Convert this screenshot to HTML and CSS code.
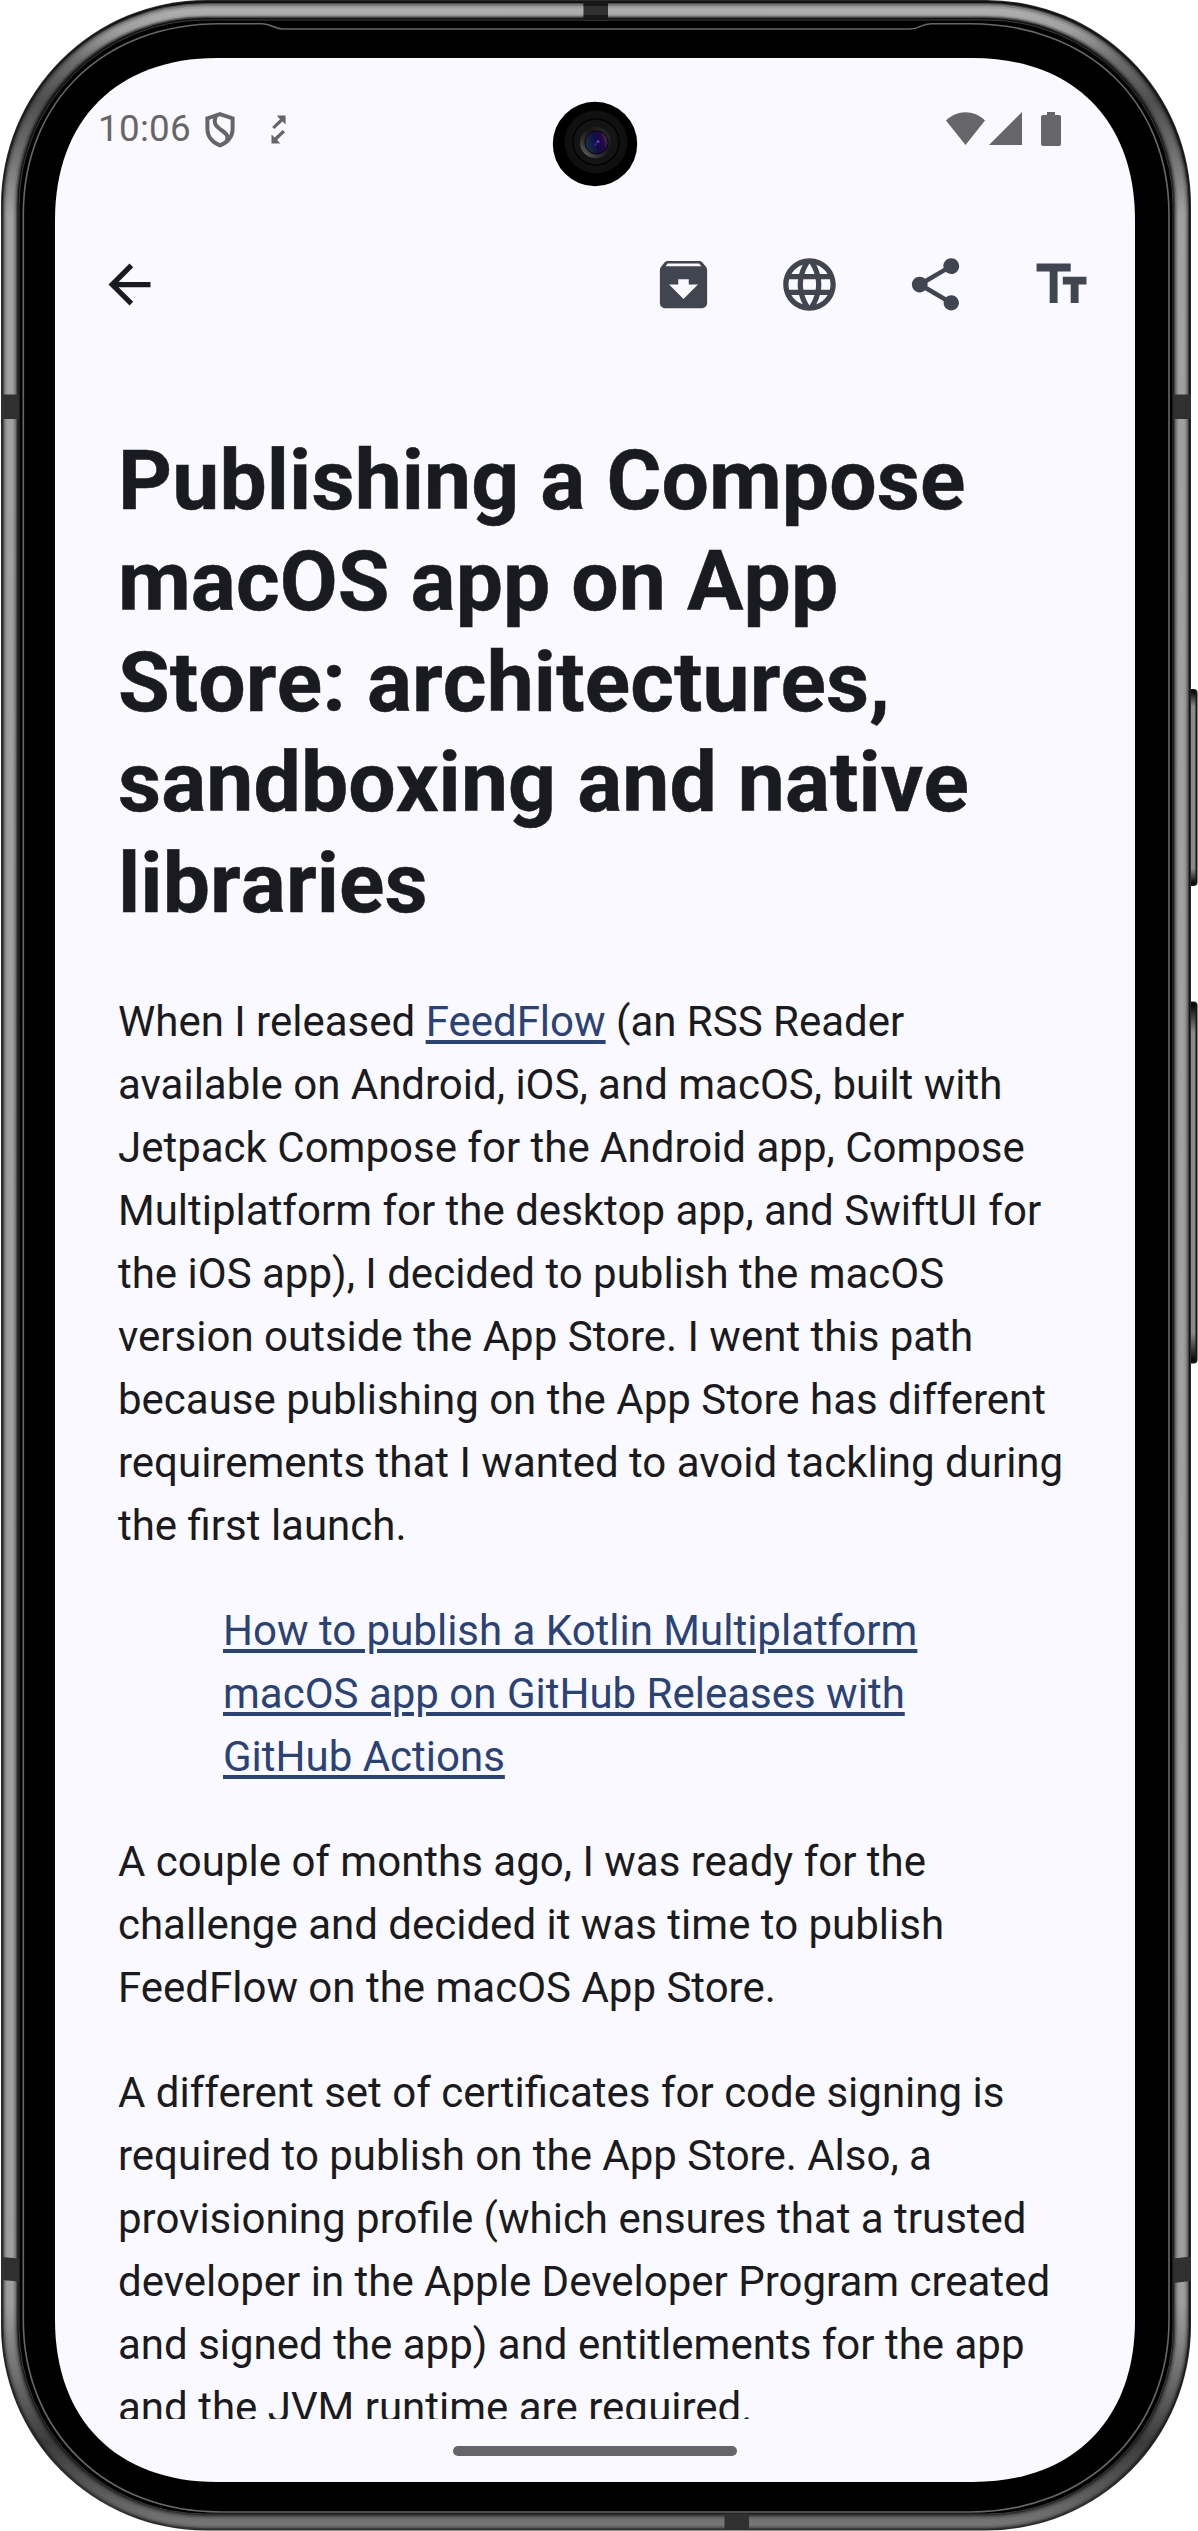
FILE: index.html
```html
<!DOCTYPE html>
<html lang="en">
<head>
<meta charset="utf-8">
<title>Publishing a Compose macOS app on App Store</title>
<link rel="stylesheet" href="styles.css">
</head>
<body>
<div class="device">
  <svg class="frame" width="1198" height="2531" viewBox="0 0 1198 2531" aria-hidden="true">
    <defs>
      <linearGradient id="metal" gradientUnits="userSpaceOnUse" x1="0" y1="0" x2="0" y2="2531">
        <stop offset="0" stop-color="#b8b8b8"/><stop offset=".012" stop-color="#a0a0a0"/>
        <stop offset=".024" stop-color="#6e6e6e"/><stop offset=".04" stop-color="#505050"/>
        <stop offset=".06" stop-color="#707070"/><stop offset=".085" stop-color="#a2a2a2"/>
        <stop offset=".91" stop-color="#a0a0a0"/><stop offset=".938" stop-color="#707070"/>
        <stop offset=".965" stop-color="#3c3c3c"/><stop offset=".985" stop-color="#5c5c5c"/>
        <stop offset="1" stop-color="#7c7c7c"/>
      </linearGradient>
      <linearGradient id="key" x1="0" y1="0" x2="0" y2="1">
        <stop offset="0" stop-color="#000"/><stop offset=".08" stop-color="#8a8a8a"/>
        <stop offset=".92" stop-color="#8a8a8a"/><stop offset="1" stop-color="#000"/>
      </linearGradient>
    </defs>
    <rect x="1186" y="689" width="11.500" height="197" rx="4" fill="#171717"/>
    <rect x="1188" y="691" width="7.500" height="193" rx="3" fill="url(#key)"/>
    <rect x="1186" y="1001.500" width="11.500" height="362" rx="4" fill="#171717"/>
    <rect x="1188" y="1003.500" width="7.500" height="358" rx="3" fill="url(#key)"/>
    <rect x="1" y="0" width="1190" height="2530.500" rx="205" fill="#2a2c2a"/>
    <rect x="2" y="1" width="1188" height="2528.500" rx="204" fill="#111"/>
    <g fill="none" stroke="url(#metal)">
      <rect x="10" y="10.500" width="1171.500" height="2511.500" rx="195" stroke-width="15" opacity=".35"/>
      <rect x="10" y="10.500" width="1171.500" height="2511.500" rx="195" stroke-width="12.500" opacity=".5"/>
      <rect x="10" y="11" width="1171.500" height="2511" rx="195" stroke-width="9.500" opacity=".65"/>
      <rect x="10" y="11.500" width="1171.500" height="2510.500" rx="195" stroke-width="6" opacity=".9"/>
    </g>
    <rect x="19" y="20" width="1154" height="2494" rx="186" fill="#000" stroke="#3b3b3b" stroke-width="1"/>
    <path d="M583.500 1h24.500v20h-24.500zM1.500 394.500H19V419H1.500zM1173.500 394.500H1191V419h-17.500zM1.500 2257l17.500 1.500v23l-17.500-1.500zM1191 2256.500l-17.500 2v24.500l17.500-2zM724.500 2513.500H749V2529.500h-24.500z" fill="#303030"/>
    <path d="M583.500 1h24.500v5h-24.500zM583.500 15h24.500v5h-24.500z" fill="#181818"/>
    <path d="M23.300 215C23.300 100 105 23.700 220 23.700H262C272 23.700 274 29 283 29H910C920 29 921 23.700 931 23.700H970C1087 23.700 1169 100 1169 215V2320C1169 2431 1087 2512 970 2512H220C105 2512 23.300 2431 23.300 2320Z" fill="#000" stroke="#676767" stroke-width="1.600"/>
  </svg>

  <main class="screen">
    <header class="status-bar">
      <div class="status-left">
        <span class="clock">10:06</span>
        <svg class="icon-shield" width="30" height="36" viewBox="0 0 30 36" fill="none" stroke="#666568" stroke-width="4">
          <path d="M15 2.200L27.600 6.400V17C27.600 25 22 31 15 33.300C8 31 2.400 25 2.400 17V6.400Z"/>
          <path d="M11.500 3C7.500 11 11 14 15.500 17.500C22 22 24 24 21.500 30"/>
        </svg>
        <svg class="icon-sync" width="17" height="30" viewBox="0 0 17 30" fill="#666568">
          <path d="M5.800 .600H14.600V9.600L11.500 6.600L3.400 14.100L1.100 11.900L9 4.200Z"/>
          <path d="M9.300 28.600H.500V19.600L3.600 22.600L11.700 15.100L14 17.300L6.100 25Z"/>
        </svg>
      </div>
      <div class="status-right">
        <svg width="39" height="33" viewBox="0 0 39 33" fill="#666568"><path d="M0 8.500C11-2.500 28-2.500 39 8.500L19.500 33Z"/></svg>
        <svg class="icon-signal" width="33" height="33" viewBox="0 0 33 33" fill="#666568"><path d="M33 0V33H0Z"/></svg>
        <svg class="icon-battery" width="20" height="34" viewBox="0 0 20 34" fill="#666568"><path d="M6 0h8v3h4q2 0 2 2v27q0 2-2 2H2q-2 0-2-2V5q0-2 2-2h4z"/></svg>
      </div>
    </header>

    <nav class="toolbar">
      <svg class="icon back" viewBox="0 0 24 24"><path d="M20 11H7.830l5.590-5.590L12 4l-8 8 8 8 1.410-1.410L7.830 13H20v-2z"/></svg>
      <div class="actions">
        <svg class="icon" viewBox="0 0 24 24"><path d="M20.540 5.230l-1.390-1.680C18.880 3.210 18.470 3 18 3H6c-.470 0-.880.210-1.160.550L3.460 5.230C3.170 5.570 3 6.020 3 6.500V19c0 1.100.900 2 2 2h14c1.100 0 2-.900 2-2V6.500c0-.480-.170-.930-.460-1.270zM12 17.500L6.500 12H10v-2h4v2h3.500L12 17.500zM5.120 5l.810-1h12l.940 1H5.120z"/></svg>
        <svg class="icon" viewBox="0 0 24 24"><path d="M11.990 2C6.470 2 2 6.480 2 12s4.470 10 9.990 10C17.520 22 22 17.520 22 12S17.520 2 11.990 2zm6.930 6h-2.950c-.320-1.250-.780-2.450-1.380-3.560 1.840.630 3.370 1.910 4.330 3.560zM12 4.040c.830 1.200 1.480 2.530 1.910 3.960h-3.820c.430-1.430 1.080-2.760 1.910-3.960zM4.260 14C4.100 13.360 4 12.690 4 12s.100-1.360.260-2h3.380c-.080.660-.140 1.320-.140 2s.060 1.340.140 2H4.260zm.820 2h2.950c.320 1.250.780 2.450 1.380 3.560-1.840-.630-3.370-1.900-4.330-3.560zm2.950-8H5.080c.960-1.660 2.490-2.930 4.330-3.560C8.810 5.550 8.350 6.750 8.030 8zM12 19.960c-.830-1.200-1.480-2.530-1.910-3.960h3.820c-.430 1.430-1.080 2.760-1.910 3.960zM14.340 14H9.660c-.090-.660-.160-1.320-.160-2s.070-1.350.160-2h4.680c.090.650.160 1.320.160 2s-.070 1.340-.160 2zm.250 5.560c.600-1.110 1.060-2.310 1.380-3.560h2.950c-.960 1.650-2.490 2.930-4.330 3.560zM16.360 14c.080-.660.140-1.320.140-2s-.060-1.340-.140-2h3.380c.160.640.260 1.310.260 2s-.100 1.360-.260 2h-3.380z"/></svg>
        <svg class="icon" viewBox="0 0 24 24"><path d="M18 16.080c-.760 0-1.440.300-1.960.770L8.910 12.700c.050-.230.090-.460.090-.700s-.040-.470-.090-.700l7.050-4.110c.540.500 1.250.810 2.040.810 1.660 0 3-1.340 3-3s-1.340-3-3-3-3 1.340-3 3c0 .240.040.470.090.700L8.040 9.810C7.500 9.310 6.790 9 6 9c-1.660 0-3 1.340-3 3s1.340 3 3 3c.790 0 1.500-.310 2.040-.810l7.120 4.160c-.050.210-.080.430-.080.650 0 1.610 1.310 2.920 2.920 2.920s2.920-1.310 2.920-2.920-1.310-2.920-2.920-2.920z"/></svg>
        <svg class="icon" viewBox="0 0 24 24"><path d="M2.500 4v3h5v12h3V7h5V4h-13zm19 5h-9v3h3v7h3v-7h3V9z"/></svg>
      </div>
    </nav>

    <article class="article">
      <h1>Publishing a Compose macOS app on App Store: architectures, sandboxing and native libraries</h1>
      <p>When I released <a href="#">FeedFlow</a> (an RSS Reader available on Android, iOS, and macOS, built with Jetpack Compose for the Android app, Compose Multiplatform for the desktop app, and SwiftUI for the iOS app), I decided to publish the macOS version outside the App Store. I went this path because publishing on the App Store has different requirements that I wanted to avoid tackling during the first launch.</p>
      <blockquote><a href="#">How to publish a Kotlin Multiplatform macOS app on GitHub Releases with GitHub Actions</a></blockquote>
      <p>A couple of months ago, I was ready for the challenge and decided it was time to publish FeedFlow on the macOS App Store.</p>
      <p>A different set of certificates for code signing is required to publish on the App Store. Also, a provisioning profile (which ensures that a trusted developer in the Apple Developer Program created and signed the app) and entitlements for the app and the JVM runtime are required.</p>
    </article>

    <footer class="gesture-bar"><div class="handle"></div></footer>
  </main>

  <svg class="camera" width="86" height="86" viewBox="0 0 86 86" aria-hidden="true">
    <defs>
      <linearGradient id="rim" x1="0" y1="1" x2="1" y2="0">
        <stop offset="0" stop-color="#777"/><stop offset=".3" stop-color="#333"/><stop offset=".6" stop-color="#151515"/><stop offset="1" stop-color="#333"/>
      </linearGradient>
      <linearGradient id="lens" x1="0" y1=".6" x2="1" y2=".3">
        <stop offset="0" stop-color="#173642"/><stop offset=".45" stop-color="#120d4a"/><stop offset=".75" stop-color="#24093c"/><stop offset="1" stop-color="#5d3566"/>
      </linearGradient>
    </defs>
    <circle cx="43" cy="43" r="42.200"/>
    <circle cx="44" cy="41" r="31.500" fill="#101010"/>
    <circle cx="44" cy="41" r="23" fill="#141414" stroke="#020202" stroke-width="1.600"/>
    <circle cx="43.500" cy="41.500" r="15.500" fill="url(#rim)"/>
    <circle cx="44.500" cy="41.500" r="11.500" fill="url(#lens)" stroke="#050508"/>
    <circle cx="46" cy="40.500" r="1.500" fill="#553bd6"/>
    <circle cx="43.500" cy="43.500" r="1.300" fill="#3420a8"/>
  </svg>
</div>
</body>
</html>
```
FILE: styles.css
```css
* { box-sizing: border-box; }

body {
  margin: 0;
  background: #fff;
  font-family: Roboto, "Liberation Sans", sans-serif;
  color: #1a1b20;
}

svg { display: block; flex: none; }

.device {
  position: relative;
  width: 1198px;
  height: 2531px;
  padding: 58px 63px 49px 55px;
  overflow: hidden;
}

.frame {
  position: absolute;
  inset: 0;
}

.screen {
  position: relative;
  display: flex;
  flex-direction: column;
  width: 1080px;
  height: 2424px;
  background: #f9f9ff;
  clip-path: path("M0 162C0 62 62 0 162 0H918C1018 0 1080 62 1080 162V2262C1080 2362 1018 2424 918 2424H162C62 2424 0 2362 0 2262Z");
}

.status-bar {
  display: flex;
  justify-content: space-between;
  height: 142px;
  padding: 48px 74px 0 43px;
}

.status-left,
.status-right {
  display: flex;
  align-items: flex-start;
}

.clock {
  width: 107px;
  margin-top: 1px;
  font-size: 36.75px;
  line-height: 43px;
  letter-spacing: 0.3px;
  color: #666568;
}

.icon-shield { margin-top: 5.5px; }
.icon-sync { margin: 8.5px 0 0 35.5px; }
.status-right { padding-top: 6px; }
.icon-signal { margin-left: 4px; }
.icon-battery { margin-left: 19px; }

.toolbar {
  display: flex;
  justify-content: space-between;
  align-items: center;
  height: 168px;
  padding: 0 42px 0 43px;
  margin-top: 0.5px;
}

.icon {
  width: 63px;
  height: 63px;
  fill: #414550;
}

.back { fill: #1a1b20; }

.actions {
  display: flex;
  gap: 63px;
}

.article {
  flex: 1;
  min-height: 0;
  overflow: hidden;
  padding: 62.5px 63px 0;
  font-size: 42px;
  line-height: 63px;
}

h1 {
  margin: 0 0 55px;
  font-size: 84px;
  line-height: 100.8px;
  font-weight: 700;
  font-kerning: none;
  letter-spacing: 0.1px;
  -webkit-text-stroke: 0.5px currentColor;
}

p { margin: 0 0 42px; }

blockquote { margin: 0 105px 42px; }

a {
  color: #2a4377;
  text-decoration-line: underline;
  text-decoration-thickness: 4px;
  text-underline-offset: 4px;
}

.gesture-bar {
  display: flex;
  justify-content: center;
  height: 63px;
  padding-top: 27px;
}

.handle {
  width: 284px;
  height: 10px;
  border-radius: 5px;
  background: #666568;
}

.camera {
  position: absolute;
  left: 551.5px;
  top: 101px;
}
```
